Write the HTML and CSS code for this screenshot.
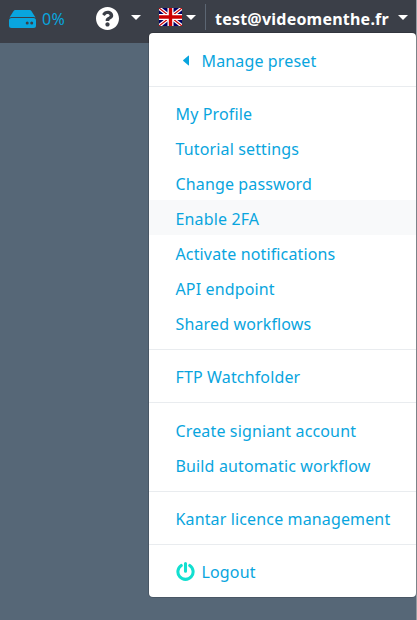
FILE: index.html
```
<!DOCTYPE html>
<html lang="en">
<head>
<meta charset="utf-8">
<title>Account menu</title>
<link rel="stylesheet" href="styles.css">
</head>
<body>
<header class="bar">
  <svg class="disk" viewBox="0 0 27 18"><path d="M6.200 0h14.600q1 0 1.600.9L26.500 7.500q-.9-.4-2-.4h-22q-1.100 0-2 .4L4.600.9Q5.200 0 6.200 0Z"/><path fill-rule="evenodd" d="M2.500 8h22q2.500 0 2.500 2.500v5q0 2.500-2.500 2.500h-22Q0 18 0 15.500v-5q0-2.500 2.500-2.500ZM18.200 11.500a1.500 1.500 0 1 0 0 3 1.500 1.500 0 0 0 0-3Zm4.500 0a1.500 1.500 0 1 0 0 3 1.500 1.500 0 0 0 0-3Z"/></svg>
  <span class="percent">0%</span>
  <svg class="help" viewBox="8 8 496 496"><path fill="#fff" d="M504 256c0 136.997-111.043 248-248 248S8 392.997 8 256C8 119.083 119.043 8 256 8s248 111.083 248 248zM262.655 90c-54.497 0-89.255 22.957-116.549 63.758-3.536 5.286-2.353 12.415 2.715 16.258l34.699 26.310c5.205 3.947 12.621 3.008 16.665-2.122 17.864-22.658 30.113-35.797 57.303-35.797 20.429 0 45.698 13.148 45.698 32.958 0 14.976-12.363 22.667-32.534 33.976C247.128 238.528 216 254.941 216 296v4c0 6.627 5.373 12 12 12h56c6.627 0 12-5.373 12-12v-1.333c0-28.462 83.186-29.647 83.186-106.667 0-58.002-60.165-102-116.531-102zM256 338c-25.365 0-46 20.635-46 46 0 25.364 20.635 46 46 46s46-20.636 46-46c0-25.365-20.635-46-46-46z"/></svg>
  <i class="caret caret-help"></i>
  <svg class="flag" viewBox="0 0 23 18"><path fill="#006" d="M0 0h23v18H0z"/><path stroke="#fff" stroke-width="3.600" d="m0 0 23 18M23 0 0 18"/><path stroke="#c00" stroke-width="1.200" d="m0 0 23 18M23 0 0 18"/><path stroke="#fff" stroke-width="6" d="M11.500 0v18M0 9h23"/><path stroke="#c00" stroke-width="3.400" d="M11.500 0v18M0 9h23"/></svg>
  <i class="caret caret-flag"></i>
  <div class="user"><span class="email">test@videomenthe.fr</span><i class="caret"></i></div>
</header>
<nav class="menu">
  <a class="item"><svg class="back" viewBox="0 0 6 10"><path fill="#09a5de" d="M6 .5v9q0 .8-.7.300L.3 5.400q-.4-.4 0-.8L5.300.2Q6-.3 6 .5Z"/></svg><span>Manage preset</span></a>
  <hr>
  <a class="item"><span>My Profile</span></a>
  <a class="item"><span>Tutorial settings</span></a>
  <a class="item"><span>Change password</span></a>
  <a class="item active"><span>Enable 2FA</span></a>
  <a class="item"><span>Activate notifications</span></a>
  <a class="item"><span>API endpoint</span></a>
  <a class="item"><span>Shared workflows</span></a>
  <hr>
  <a class="item"><span>FTP Watchfolder</span></a>
  <hr class="loose">
  <a class="item"><span>Create signiant account</span></a>
  <a class="item"><span>Build automatic workflow</span></a>
  <hr class="tight">
  <a class="item"><span>Kantar licence management</span></a>
  <hr>
  <a class="item"><svg class="power" viewBox="0 0 18 18"><path d="M5 3.300a7.200 7.200 0 1 0 8 0M9 1.500v7.200"/></svg><span>Logout</span></a>
</nav>
</body>
</html>
```
FILE: styles.css
```
* { box-sizing: border-box; }
body {
  margin: 0;
  height: 620px;
  overflow: hidden;
  background: #566777;
  border-right: 1px solid #929aa1;
  font-family: "Noto Sans", "Open Sans", sans-serif;
  font-size: 16px;
}
.bar {
  height: 43px;
  background: #3b3f48;
  display: flex;
  align-items: flex-start;
}
.disk { width: 27px; height: 18px; margin: 10px 0 0 9px; fill: #09a5de; }
.percent { margin: 7px 0 0 6px; width: 24px; line-height: 24px; color: #09a5de; white-space: nowrap; letter-spacing: .3px; }
.help { width: 23px; height: 23px; margin: 7px 0 0 30px; }
.caret {
  width: 0;
  height: 0;
  border: 5px solid transparent;
  border-top-color: #fff;
  border-bottom: 0;
}
.caret-help { margin: 15px 0 0 12px; }
.flag { width: 23px; height: 18px; margin: 8px 0 0 18px; }
.caret-flag { margin: 15px 0 0 4px; }
.user {
  display: flex;
  align-items: center;
  height: 26px;
  margin: 4px 0 0 9px;
  padding-left: 9px;
  border-left: 1px solid #5c6673;
  color: #fff;
  font-weight: 700;
}
.email { width: 183px; line-height: 24px; padding-top: 3px; white-space: nowrap; letter-spacing: .22px; }
.menu {
  position: absolute;
  left: 149px;
  top: 33px;
  width: 267px;
  height: 564px;
  padding: 9px 0 8px;
  background: #fff;
  border-radius: 4px;
  box-shadow: 0 0 0 1px rgba(0, 0, 0, .15);
}
.item {
  display: flex;
  align-items: center;
  height: 35px;
  padding-left: 26.500px;
  color: #09a5de;
  white-space: nowrap;
  letter-spacing: .14px;
}
.item span { padding-top: 2px; }
.active { background: #f8f9fa; }
hr { height: 1px; margin: 8.650px 0; border: 0; background: #e9ecef; }
.loose { margin-bottom: 9.250px; }
.tight { margin-top: 8.050px; }
.back { width: 6px; height: 11px; margin: 2px 13px 0 7px; }
.power { width: 19px; height: 19px; margin: 2px 7px 0 0; fill: none; stroke: #12dfd0; stroke-width: 2.900; stroke-linecap: round; }
```
